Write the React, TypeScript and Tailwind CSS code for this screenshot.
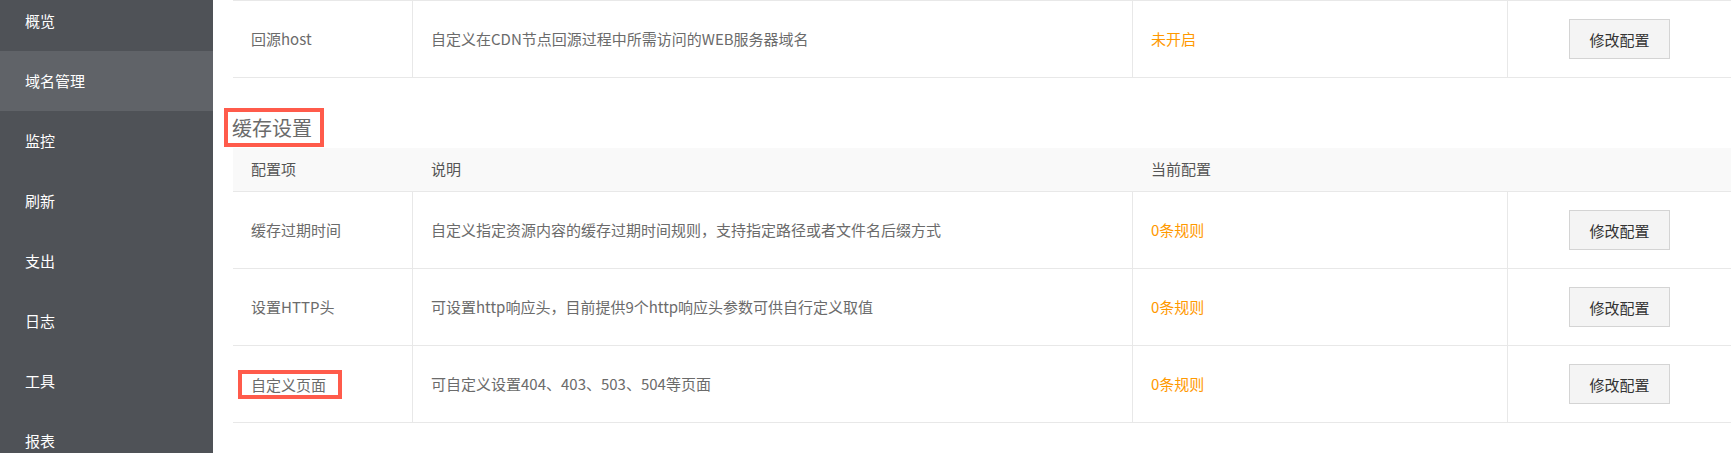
import React from "react";

const menu = ["概览", "域名管理", "监控", "刷新", "支出", "日志", "工具", "报表"];

const rows = [
  {
    name: "缓存过期时间",
    desc: "自定义指定资源内容的缓存过期时间规则，支持指定路径或者文件名后缀方式",
    value: "0条规则",
  },
  {
    name: "设置HTTP头",
    desc: "可设置http响应头，目前提供9个http响应头参数可供自行定义取值",
    value: "0条规则",
  },
  {
    name: "自定义页面",
    desc: "可自定义设置404、403、503、504等页面",
    value: "0条规则",
    marked: true,
  },
];

const cols = "grid grid-cols-[180px_720px_375px_1fr]";

function EditButton() {
  return (
    <button
      type="button"
      className="w-[101px] h-[40px] bg-[#f4f4f4] border border-[#d4d4d4] text-[#333] text-[15px] leading-none"
    >
      修改配置
    </button>
  );
}

function Row({ name, desc, value, marked }: { name: string; desc: string; value: string; marked?: boolean }) {
  return (
    <div className={`${cols} h-[77px] border-b border-[#e8e8e8] text-[15px] text-[#6b6b6b]`}>
      <div className="flex items-center pl-[18px] border-r border-[#e8e8e8]">
        {marked ? (
          <span className="-ml-[13px] pl-[9px] pr-[12px] border-4 border-[#ff5b4b] leading-[21px]">{name}</span>
        ) : (
          <span>{name}</span>
        )}
      </div>
      <div className="flex items-center pl-[18px] border-r border-[#e8e8e8]">{desc}</div>
      <div className="flex items-center pl-[18px] border-r border-[#e8e8e8] text-[#ff9900]">{value}</div>
      <div className="flex items-center justify-center">
        <EditButton />
      </div>
    </div>
  );
}

export default function App() {
  return (
    <div className="flex w-[1731px] h-[453px] overflow-hidden bg-white font-['Microsoft_YaHei','Noto_Sans_CJK_SC',sans-serif]">
      {/* Sidebar */}
      <aside className="w-[213px] shrink-0 bg-[#4f5257] text-white text-[15px]">
        <div className="-mt-[9px]">
          {menu.map((m) => (
            <div
              key={m}
              className={`h-[60px] flex items-center pl-[25px] ${m === "域名管理" ? "bg-[#606368]" : ""}`}
            >
              {m}
            </div>
          ))}
        </div>
      </aside>

      {/* Content */}
      <main className="flex-1 pl-[20px]">
        <div className={`${cols} h-[78px] border-y border-[#e8e8e8] text-[15px] text-[#6b6b6b]`}>
          <div className="flex items-center pl-[18px] border-r border-[#e8e8e8]">回源host</div>
          <div className="flex items-center pl-[18px] border-r border-[#e8e8e8]">
            自定义在CDN节点回源过程中所需访问的WEB服务器域名
          </div>
          <div className="flex items-center pl-[18px] border-r border-[#e8e8e8] text-[#ff9900]">未开启</div>
          <div className="flex items-center justify-center">
            <EditButton />
          </div>
        </div>

        <div className="h-[70px] pt-[30px]">
          <span className="inline-block -ml-[9px] pl-[4px] pr-[8px] border-4 border-[#ff5b4b] text-[20px] leading-[31px] text-[#6b6b6b]">
            缓存设置
          </span>
        </div>

        <div className={`${cols} h-[44px] bg-[#f9f9f9] border-b border-[#e8e8e8] text-[15px] text-[#555]`}>
          <div className="flex items-center pl-[18px]">配置项</div>
          <div className="flex items-center pl-[18px]">说明</div>
          <div className="flex items-center pl-[18px]">当前配置</div>
          <div />
        </div>

        {rows.map((r) => (
          <Row key={r.name} {...r} />
        ))}
      </main>
    </div>
  );
}
